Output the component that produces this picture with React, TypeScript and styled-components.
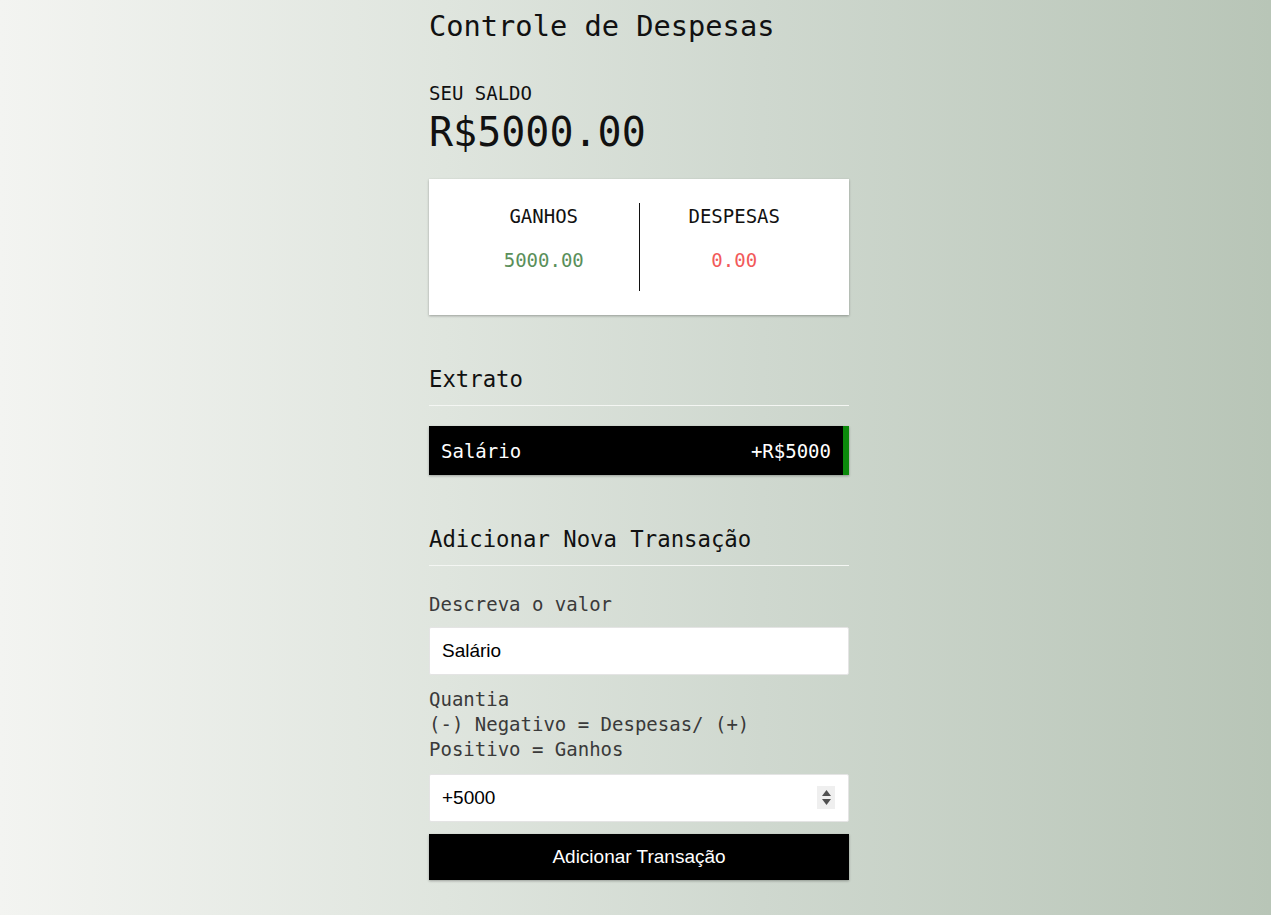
import React from "react";
import styled, { createGlobalStyle } from "styled-components";

const GlobalStyle = createGlobalStyle`
  * { box-sizing: border-box; }
  html, body { margin: 0; padding: 0; }
  body {
    min-height: 915px;
    background: linear-gradient(to right, #f3f4f1 0%, #dfe5de 35%, #cfd8cf 60%, #b8c5b7 100%);
    font-family: "DejaVu Sans Mono", "Liberation Mono", monospace;
    color: #111;
  }
`;

const mono = `"DejaVu Sans Mono", "Liberation Mono", monospace`;
const sans = `"Liberation Sans", Arial, sans-serif`;
const shadow = `0 1px 3px rgba(0, 0, 0, 0.12), 0 1px 2px rgba(0, 0, 0, 0.2)`;

const Container = styled.main`
  width: 420px;
  margin: 0 auto;
  padding: 8px 0 34px;
  display: flex;
  flex-direction: column;
  position: relative;
  left: 3.5px;
`;

const Title = styled.h2`
  margin: 0;
  font-family: ${mono};
  font-weight: 400;
  font-size: 28.7px;
  line-height: 36px;
  color: #111;
`;

const BalanceLabel = styled.h4`
  margin: 37px 0 0;
  font-weight: 400;
  font-size: 19px;
  line-height: 24px;
  text-transform: uppercase;
  color: #111;
`;

const Balance = styled.h1`
  margin: 3px 0 0;
  font-weight: 400;
  font-size: 40px;
  line-height: 48px;
  color: #111;
`;

const Card = styled.section`
  margin-top: 23px;
  background: #fff;
  box-shadow: ${shadow};
  padding: 24px 20px;
  display: flex;
`;

const Column = styled.div<{ $divider?: boolean }>`
  flex: 1;
  display: flex;
  flex-direction: column;
  align-items: center;
  gap: 18px;
  padding-bottom: 18px;
  border-right: ${(p) => (p.$divider ? "1px solid #111" : "none")};
`;

const ColumnTitle = styled.h4`
  margin: 0;
  font-weight: 400;
  font-size: 19px;
  line-height: 26px;
  text-transform: uppercase;
  color: #111;
`;

const Money = styled.p<{ $tone: "plus" | "minus" }>`
  margin: 0;
  font-size: 19px;
  line-height: 26px;
  color: ${(p) => (p.$tone === "plus" ? "#5a8f5a" : "#f25a5a")};
`;

const SectionTitle = styled.h3`
  margin: 50px 0 0;
  font-weight: 400;
  font-size: 22.3px;
  line-height: 28px;
  padding-bottom: 12px;
  border-bottom: 1px solid #f4f6f3;
  color: #111;
`;

const List = styled.ul`
  list-style: none;
  margin: 20px 0 0;
  padding: 0;
`;

const Item = styled.li<{ $tone: "plus" | "minus" }>`
  background: #000;
  color: #fff;
  box-shadow: ${shadow};
  display: flex;
  justify-content: space-between;
  padding: 13px 12px 11px 12px;
  border-right: 6px solid ${(p) => (p.$tone === "plus" ? "#0b8a0b" : "#c0392b")};
  font-size: 19px;
  line-height: 25px;
`;

const Form = styled.form`
  display: flex;
  flex-direction: column;
`;

const Label = styled.label<{ $top: number }>`
  margin-top: ${(p) => p.$top}px;
  font-size: 19px;
  line-height: 25px;
  color: #3a3a3a;
`;

const Field = styled.div<{ $top: number }>`
  margin-top: ${(p) => p.$top}px;
  position: relative;
`;

const Input = styled.input`
  display: block;
  width: 100%;
  height: 48px;
  border: 1px solid #e4e4e4;
  border-radius: 2px;
  background: #fff;
  padding: 0 12px;
  font-family: ${sans};
  font-size: 19px;
  color: #000;
  outline: none;
`;

const Spinner = styled.div`
  position: absolute;
  right: 14px;
  top: 12px;
  width: 18px;
  height: 23px;
  background: #efefef;
  display: flex;
  flex-direction: column;
  align-items: center;
  justify-content: center;
  gap: 3px;
`;

const Button = styled.button`
  margin-top: 12px;
  height: 46px;
  width: 100%;
  border: 0;
  background: #000;
  color: #fff;
  font-family: ${sans};
  font-size: 19px;
  box-shadow: ${shadow};
  cursor: pointer;
`;

export default function App() {
  return (
    <>
      <GlobalStyle />
      <Container>
        <Title>Controle de Despesas</Title>
        <BalanceLabel>Seu Saldo</BalanceLabel>
        <Balance>R$5000.00</Balance>
        <Card>
          <Column $divider>
            <ColumnTitle>Ganhos</ColumnTitle>
            <Money $tone="plus">5000.00</Money>
          </Column>
          <Column>
            <ColumnTitle>Despesas</ColumnTitle>
            <Money $tone="minus">0.00</Money>
          </Column>
        </Card>

        <SectionTitle>Extrato</SectionTitle>
        <List>
          <Item $tone="plus">
            <span>Salário</span>
            <span>+R$5000</span>
          </Item>
        </List>

        <SectionTitle>Adicionar Nova Transação</SectionTitle>
        <Form onSubmit={(e) => e.preventDefault()}>
          <Label $top={26} htmlFor="text">Descreva o valor</Label>
          <Field $top={10}>
            <Input id="text" type="text" defaultValue="Salário" />
          </Field>
          <Label $top={12} htmlFor="amount">
            Quantia
            <br />
            (-) Negativo = Despesas/ (+) Positivo = Ganhos
          </Label>
          <Field $top={12}>
            <Input id="amount" type="text" defaultValue="+5000" />
            <Spinner>
              <svg width="9" height="6" viewBox="0 0 9 6">
                <path d="M4.5 0 L9 6 L0 6 Z" fill="#505050" />
              </svg>
              <svg width="9" height="6" viewBox="0 0 9 6">
                <path d="M0 0 L9 0 L4.5 6 Z" fill="#505050" />
              </svg>
            </Spinner>
          </Field>
          <Button type="submit">Adicionar Transação</Button>
        </Form>
      </Container>
    </>
  );
}
